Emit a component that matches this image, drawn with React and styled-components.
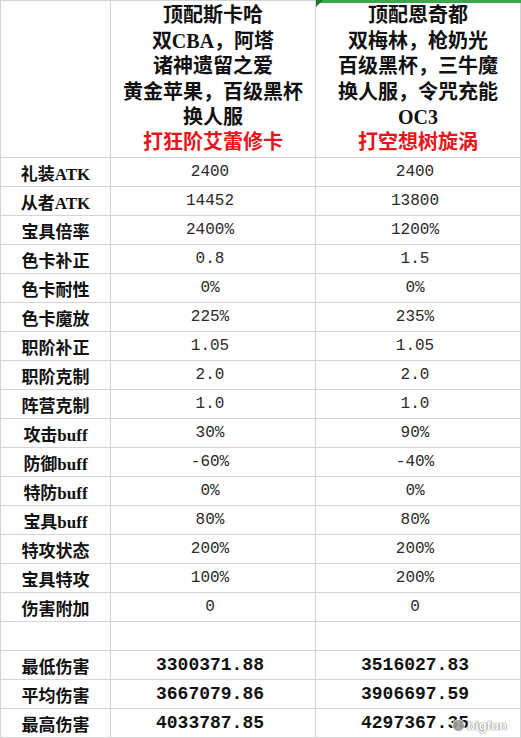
import React from 'react'
import styled, { createGlobalStyle } from 'styled-components'

const GlobalStyle = createGlobalStyle`
	html, body {
		margin: 0;
		padding: 0;
		background: #fff;
	}
	body {
		font-family: 'Liberation Serif', 'Noto Sans CJK SC', serif;
		color: #111;
	}
`

const Sheet = styled.div`
	position: relative;
	display: grid;
	grid-template-columns: 110px 205px 205px;
	grid-template-rows: 157px;
	grid-auto-rows: 29px;
	width: 521px;
	border-left: 1px solid #d4d4d4;
	border-top: 1px solid #d4d4d4;
	box-sizing: border-box;
`

const Cell = styled.div`
	box-sizing: border-box;
	border-right: 1px solid #d4d4d4;
	border-bottom: 1px solid #d4d4d4;
	display: flex;
	align-items: center;
	justify-content: center;
	white-space: nowrap;
`

const HeadCell = styled(Cell)`
	position: relative;
	flex-direction: column;
	font-family: 'Liberation Serif', 'Noto Sans CJK SC', serif;
	font-weight: 700;
	font-size: 20px;
	line-height: 25.4px;
	padding-top: 1px;
	${(p) =>
		p.active &&
		`
		&::before {
			content: '';
			position: absolute;
			left: 0;
			right: -1px;
			top: -1px;
			height: 3px;
			background: #3aa84a;
		}
		&::after {
			content: '';
			position: absolute;
			left: 0;
			top: -1px;
			border-top: 7px solid #1a7a25;
			border-right: 7px solid transparent;
		}
	`}
`

const Line = styled.span`
	color: ${(p) => (p.red ? '#e8141b' : '#111')};
`

const Label = styled(Cell)`
	font-weight: 700;
	font-size: 17px;
	color: #111;
`

const Value = styled(Cell)`
	font-family: 'Liberation Mono', 'Noto Sans CJK SC', monospace;
	font-size: ${(p) => (p.strong ? '18px' : '16px')};
	font-weight: ${(p) => (p.strong ? 700 : 400)};
	color: ${(p) => (p.strong ? '#111' : '#2a2a2a')};
	padding-right: 6px;
`

const Watermark = styled.div`
	position: absolute;
	right: 14px;
	bottom: 5px;
	display: flex;
	align-items: center;
	gap: 2px;
	font-family: 'Liberation Sans', sans-serif;
	font-size: 13px;
	font-weight: 700;
	color: #fff;
	text-shadow: 0 0 1px #777, 0 0 1px #777, 0 0 1px #777;
	opacity: 0.9;
`

const Dot = styled.span`
	width: 11px;
	height: 11px;
	border-radius: 50%;
	background: #9a9a9a;
	border: 1px solid #fff;
`

const heads = [
	{
		lines: ['顶配斯卡哈', '双CBA，阿塔', '诸神遗留之爱', '黄金苹果，百级黑杯', '换人服'],
		red: '打狂阶艾蕾修卡',
	},
	{
		lines: ['顶配恩奇都', '双梅林，枪奶光', '百级黑杯，三牛魔', '换人服，令咒充能', 'OC3'],
		red: '打空想树旋涡',
	},
]

const rows = [
	['礼装ATK', '2400', '2400'],
	['从者ATK', '14452', '13800'],
	['宝具倍率', '2400%', '1200%'],
	['色卡补正', '0.8', '1.5'],
	['色卡耐性', '0%', '0%'],
	['色卡魔放', '225%', '235%'],
	['职阶补正', '1.05', '1.05'],
	['职阶克制', '2.0', '2.0'],
	['阵营克制', '1.0', '1.0'],
	['攻击buff', '30%', '90%'],
	['防御buff', '-60%', '-40%'],
	['特防buff', '0%', '0%'],
	['宝具buff', '80%', '80%'],
	['特攻状态', '200%', '200%'],
	['宝具特攻', '100%', '200%'],
	['伤害附加', '0', '0'],
	['', '', ''],
]

const totals = [
	['最低伤害', '3300371.88', '3516027.83'],
	['平均伤害', '3667079.86', '3906697.59'],
	['最高伤害', '4033787.85', '4297367.35'],
]

const App = () => {
	return (
		<>
			<GlobalStyle />
			<Sheet>
				<HeadCell />
				{heads.map((h, i) => (
					<HeadCell key={i} active={i === 1}>
						{h.lines.map((l) => (
							<Line key={l}>{l}</Line>
						))}
						<Line red>{h.red}</Line>
					</HeadCell>
				))}
				{rows.map((r, i) => (
					<React.Fragment key={i}>
						<Label>{r[0]}</Label>
						<Value>{r[1]}</Value>
						<Value>{r[2]}</Value>
					</React.Fragment>
				))}
				{totals.map((r) => (
					<React.Fragment key={r[0]}>
						<Label>{r[0]}</Label>
						<Value strong>{r[1]}</Value>
						<Value strong>{r[2]}</Value>
					</React.Fragment>
				))}
				<Watermark>
					<Dot />
					bigfun
				</Watermark>
			</Sheet>
		</>
	)
}

export default App
